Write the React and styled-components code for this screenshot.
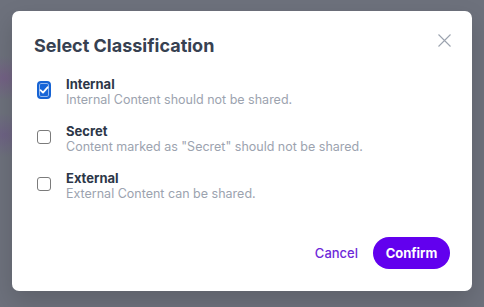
import { useState } from "react";
import styled, { createGlobalStyle } from "styled-components";

const GlobalStyle = createGlobalStyle`
  html, body {
    margin: 0;
    padding: 0;
  }
  body {
    font-family: Inter, "Noto Sans", sans-serif;
    -webkit-font-smoothing: antialiased;
  }
`;

const Backdrop = styled.div`
  width: 484px;
  height: 307px;
  box-sizing: border-box;
  padding-top: 11px;
  display: flex;
  justify-content: center;
  align-items: flex-start;
  background:
    radial-gradient(ellipse 30px 22px at 4px 78px, rgba(120, 84, 140, 0.55), transparent),
    radial-gradient(ellipse 30px 22px at 4px 135px, rgba(110, 84, 140, 0.5), transparent),
    #6d717c;
`;

const Dialog = styled.div`
  width: 460px;
  height: 280px;
  box-sizing: border-box;
  padding: 22px 22px 22px;
  background: #fff;
  border-radius: 7px;
  box-shadow: 0 10px 25px rgba(0, 0, 0, 0.15);
  display: flex;
  flex-direction: column;
`;

const Header = styled.div`
  display: flex;
  justify-content: space-between;
  align-items: flex-start;
`;

const Title = styled.h2`
  margin: 0;
  font-size: 18px;
  line-height: 25px;
  font-weight: 700;
  color: #374151;
`;

const CloseButton = styled.button`
  border: none;
  background: none;
  padding: 0;
  margin: 0 -1px 0 0;
  width: 14px;
  height: 14px;
  cursor: pointer;
  display: flex;
  align-items: center;
  justify-content: center;
`;

const List = styled.div`
  margin-top: 19px;
  display: flex;
  flex-direction: column;
  gap: 16px;
`;

const Option = styled.label`
  display: flex;
  align-items: flex-start;
  gap: 15px;
  cursor: pointer;
`;

const BoxSlot = styled.span`
  width: 14px;
  height: 25px;
  margin-left: 3px;
  display: flex;
  align-items: center;
  justify-content: center;
  flex-shrink: 0;
`;

const Box = styled.span`
  box-sizing: border-box;
  display: flex;
  align-items: center;
  justify-content: center;
  width: ${(p) => (p.$checked ? "18px" : "14px")};
  height: ${(p) => (p.$checked ? "18px" : "14px")};
  border-radius: ${(p) => (p.$checked ? "4px" : "3px")};
  border: ${(p) => (p.$checked ? "2px solid #1663d4" : "1px solid #7b7b7b")};
  background: ${(p) => (p.$checked ? "#1765d8" : "#fff")};
  box-shadow: ${(p) =>
    p.$checked ? "inset 0 0 0 1px rgba(255, 255, 255, 0.55)" : "none"};
`;

const Text = styled.div`
  display: flex;
  flex-direction: column;
`;

const Label = styled.span`
  font-size: 13px;
  line-height: 15px;
  font-weight: 700;
  color: #2d3748;
`;

const Description = styled.span`
  font-size: 12.5px;
  line-height: 16px;
  color: #9ca3af;
`;

const Footer = styled.div`
  margin-top: auto;
  display: flex;
  justify-content: flex-end;
  align-items: center;
  gap: 8px;
`;

const TextButton = styled.button`
  border: none;
  background: none;
  padding: 8px 7px;
  font-family: inherit;
  font-size: 13px;
  font-weight: 500;
  color: #6d28d9;
  cursor: pointer;
`;

const PrimaryButton = styled.button`
  border: none;
  height: 32px;
  width: 77px;
  border-radius: 16px;
  background: #6200ee;
  color: #fff;
  font-family: inherit;
  font-size: 13px;
  font-weight: 700;
  cursor: pointer;
`;

const options = [
  {
    id: "internal",
    label: "Internal",
    description: "Internal Content should not be shared.",
  },
  {
    id: "secret",
    label: "Secret",
    description: 'Content marked as "Secret" should not be shared.',
  },
  {
    id: "external",
    label: "External",
    description: "External Content can be shared.",
  },
];

function Check() {
  return (
    <svg width="10" height="10" viewBox="0 0 10 10" fill="none">
      <path
        d="M1.5 5.2 L4 7.6 L8.6 2.3"
        stroke="#fff"
        strokeWidth="1.8"
        strokeLinecap="round"
        strokeLinejoin="round"
      />
    </svg>
  );
}

export default function App() {
  const [selected, setSelected] = useState(["internal"]);

  function toggle(id) {
    setSelected((s) => (s.includes(id) ? s.filter((x) => x !== id) : [...s, id]));
  }

  return (
    <>
      <GlobalStyle />
      <Backdrop>
        <Dialog>
          <Header>
            <Title>Select Classification</Title>
            <CloseButton aria-label="Close">
              <svg width="13" height="13" viewBox="0 0 13 13">
                <path d="M0.5 0.5 L12.5 12.5 M12.5 0.5 L0.5 12.5" stroke="#9ca3af" strokeWidth="1.1" />
              </svg>
            </CloseButton>
          </Header>

          <List>
            {options.map((opt) => {
              const checked = selected.includes(opt.id);
              return (
                <Option key={opt.id} onClick={() => toggle(opt.id)}>
                  <BoxSlot>
                    <Box $checked={checked}>{checked && <Check />}</Box>
                  </BoxSlot>
                  <Text>
                    <Label>{opt.label}</Label>
                    <Description>{opt.description}</Description>
                  </Text>
                </Option>
              );
            })}
          </List>

          <Footer>
            <TextButton>Cancel</TextButton>
            <PrimaryButton>Confirm</PrimaryButton>
          </Footer>
        </Dialog>
      </Backdrop>
    </>
  );
}
